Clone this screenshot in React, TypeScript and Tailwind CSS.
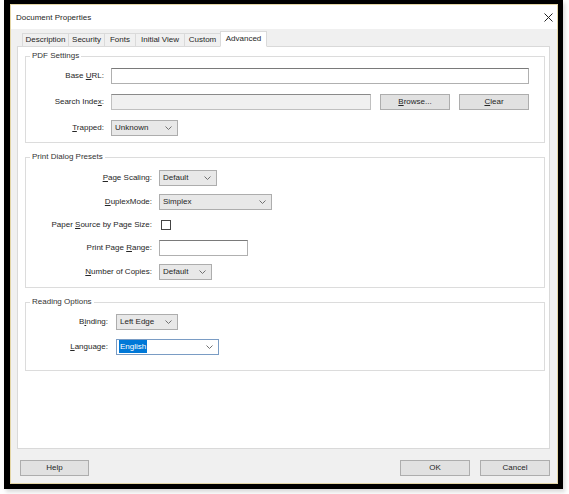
import React from 'react';

const Chevron = () => (
  <svg width="7" height="4" viewBox="0 0 7 4" className="shrink-0">
    <polyline points="0.5,0.5 3.5,3.5 6.5,0.5" fill="none" stroke="#707070" strokeWidth="1" />
  </svg>
);

function Select({
  width,
  children,
  editable,
}: {
  width: string;
  children: React.ReactNode;
  editable?: boolean;
}) {
  return (
    <div
      className={`${width} h-[16px] flex items-center justify-between pl-[3px] pr-[5px] border ${
        editable ? 'bg-white border-[#7a9cc4]' : 'bg-[#e8e8e8] border-[#adadad]'
      }`}
    >
      <span className="leading-none">{children}</span>
      <Chevron />
    </div>
  );
}

function Button({ width, children }: { width: string; children: React.ReactNode }) {
  return (
    <div
      className={`${width} h-[16px] flex items-center justify-center border border-[#adadad] bg-[#e1e1e1] leading-none`}
    >
      {children}
    </div>
  );
}

function Row({
  label,
  labelWidth,
  gap,
  className,
  children,
}: {
  label: React.ReactNode;
  labelWidth: string;
  gap: string;
  className?: string;
  children: React.ReactNode;
}) {
  return (
    <div className={`flex items-center h-[16px] ${className ?? ''}`}>
      <div className={`${labelWidth} ${gap} text-right leading-none shrink-0`}>{label}</div>
      {children}
    </div>
  );
}

function Group({
  title,
  className,
  children,
}: {
  title: string;
  className?: string;
  children: React.ReactNode;
}) {
  return (
    <fieldset className={`ml-[7px] mr-[4px] border border-[#dcdcdc] ${className ?? ''}`}>
      <legend className="ml-[4px] px-[2px] h-[10px] leading-[10px] text-[#333]">{title}</legend>
      {children}
    </fieldset>
  );
}

const U = ({ children }: { children: React.ReactNode }) => (
  <span className="underline underline-offset-1">{children}</span>
);

export default function App() {
  const tabs = ['Description', 'Security', 'Fonts', 'Initial View', 'Custom', 'Advanced'];
  const tabWidths = ['w-[47px]', 'w-[37px]', 'w-[32px]', 'w-[50px]', 'w-[37px]', 'w-[47px]'];

  return (
    <div className="w-[569px] h-[494px] bg-white pl-[4px] font-['Liberation_Sans',Arial,sans-serif] text-[8px] text-[#262626]">
      <div className="w-[559px] h-[489px] border-solid border-black border-t-4 border-l-[6px] border-r-[5px] border-b-[5px] shadow-[2px_3px_4px_rgba(0,0,0,0.15)]">
        <div className="h-full border border-[#e4d6a6] flex flex-col">
          {/* Title bar */}
          <div className="h-[24px] bg-white flex items-center justify-between pl-[5px] pr-[4px] pt-px shrink-0">
            <span className="leading-none">Document Properties</span>
            <svg width="9" height="9" viewBox="0 0 9 9">
              <path d="M0.5 0.5 L8.5 8.5 M8.5 0.5 L0.5 8.5" stroke="#222" strokeWidth="1" />
            </svg>
          </div>

          {/* Body */}
          <div className="flex-1 bg-[#f0f0f0] pl-[6px] pr-[7px] flex flex-col">
            {/* Tabs */}
            <div className="mt-[2px] h-[16px] flex items-end pl-[5px] -mb-px relative z-10">
              {tabs.map((t, i) => {
                const selected = t === 'Advanced';
                return (
                  <div
                    key={t}
                    className={`${tabWidths[i]} ${i > 0 ? '-ml-px' : ''} flex items-center justify-center border border-[#dadada] leading-none ${
                      selected ? 'h-[16px] bg-white border-b-white' : 'h-[14px] bg-[#f0f0f0]'
                    }`}
                  >
                    {t}
                  </div>
                );
              })}
            </div>

            {/* Panel */}
            <div className="h-[403px] bg-white border border-[#d9d9d9] flex flex-col">
              <Group title="PDF Settings" className="mt-[4px] pt-[7px] pb-[6px]">
                <Row label={<>Base <U>U</U>RL:</>} labelWidth="w-[78px]" gap="mr-[7px]">
                  <div className="w-[418px] h-[16px] border border-[#b0b0b0] border-t-[#7a7a7a] bg-white" />
                </Row>
                <Row label={<>Search Inde<U>x</U>:</>} labelWidth="w-[78px]" gap="mr-[7px]" className="mt-[10px]">
                  <div className="w-[260px] h-[16px] border border-[#c0c0c0] border-t-[#8a8a8a] bg-[#f0f0f0]" />
                  <div className="ml-[9px]">
                    <Button width="w-[70px]">
                      <U>B</U>rowse...
                    </Button>
                  </div>
                  <div className="ml-[9px]">
                    <Button width="w-[70px]">
                      <U>C</U>lear
                    </Button>
                  </div>
                </Row>
                <Row label={<><U>T</U>rapped:</>} labelWidth="w-[78px]" gap="mr-[7px]" className="mt-[10px]">
                  <Select width="w-[67px]">Unknown</Select>
                </Row>
              </Group>

              <Group title="Print Dialog Presets" className="mt-[9px] pt-[8px] pb-[7px]">
                <Row label={<><U>P</U>age Scaling:</>} labelWidth="w-[126px]" gap="mr-[7px]">
                  <Select width="w-[58px]">Default</Select>
                </Row>
                <Row label={<><U>D</U>uplexMode:</>} labelWidth="w-[126px]" gap="mr-[7px]" className="mt-[8px]">
                  <Select width="w-[113px]">Simplex</Select>
                </Row>
                <Row label={<>Paper <U>S</U>ource by Page Size:</>} labelWidth="w-[126px]" gap="mr-[7px]" className="mt-[7px]">
                  <div className="ml-[2px] w-[10px] h-[10px] border border-[#444] bg-white" />
                </Row>
                <Row label={<>Print Page <U>R</U>ange:</>} labelWidth="w-[126px]" gap="mr-[7px]" className="mt-[7px]">
                  <div className="w-[89px] h-[16px] border border-[#b0b0b0] border-t-[#7a7a7a] bg-white" />
                </Row>
                <Row label={<><U>N</U>umber of Copies:</>} labelWidth="w-[126px]" gap="mr-[7px]" className="mt-[8px]">
                  <Select width="w-[53px]">Default</Select>
                </Row>
              </Group>

              <Group title="Reading Options" className="mt-[9px] pt-[7px] pb-[15px]">
                <Row label={<>B<U>i</U>nding:</>} labelWidth="w-[82px]" gap="mr-[8px]">
                  <Select width="w-[62px]">Left Edge</Select>
                </Row>
                <Row label={<><U>L</U>anguage:</>} labelWidth="w-[82px]" gap="mr-[8px]" className="mt-[9px]">
                  <Select width="w-[103px]" editable>
                    <span className="bg-[#0078d7] text-white px-[1px] -ml-[1px] py-[2px]">English</span>
                  </Select>
                </Row>
              </Group>
            </div>

            {/* Buttons */}
            <div className="mt-[11px] flex items-center">
              <div className="ml-[3px]">
                <Button width="w-[69px]">Help</Button>
              </div>
              <div className="ml-auto">
                <Button width="w-[70px]">OK</Button>
              </div>
              <div className="ml-[10px]">
                <Button width="w-[70px]">Cancel</Button>
              </div>
            </div>
          </div>
        </div>
      </div>
    </div>
  );
}
